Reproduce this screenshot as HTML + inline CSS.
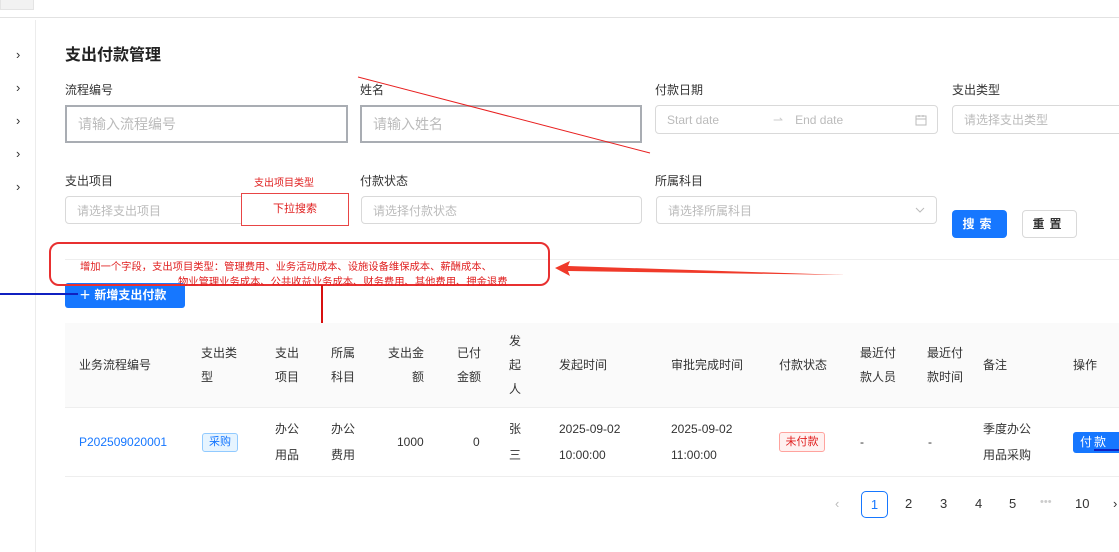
<!DOCTYPE html>
<html><head><meta charset="utf-8"><style>
*{margin:0;padding:0;box-sizing:border-box}
body{width:1119px;height:552px;overflow:hidden;background:#fff;position:relative;font-family:"Liberation Sans","Noto Sans CJK SC",sans-serif;color:#222;font-size:12px}
.a{position:absolute;white-space:nowrap}
.lbl{font-size:12px;color:#333}
.in{position:absolute;border:1px solid #d9d9d9;border-radius:4px;color:#bbb;font-size:12px;padding-left:11px;display:flex;align-items:center}
.th{position:absolute;font-size:12px;color:#333;line-height:24px}
.td{position:absolute;font-size:12px;color:#333;line-height:26px}
.pg{position:absolute;top:496px;font-size:13px;color:#333}
</style></head><body>
<div class="a" style="left:0;top:0;width:34px;height:10px;background:#f2f2f2;border:1px solid #e4e4e4;border-top:0"></div>
<div class="a" style="left:0;top:17px;width:1119px;height:1px;background:#e2e2e2"></div>
<div class="a" style="left:35px;top:20px;width:1px;height:532px;background:#ececec"></div>
<div class="a" style="left:16px;top:38px;color:#333;font-size:13px;line-height:33px">›<br>›<br>›<br>›<br>›</div>

<div class="a" style="left:65px;top:41px;font-size:16px;font-weight:bold;color:#222">支出付款管理</div>

<div class="a lbl" style="left:65px;top:81px">流程编号</div>
<div class="a lbl" style="left:360px;top:81px">姓名</div>
<div class="a lbl" style="left:655px;top:81px">付款日期</div>
<div class="a lbl" style="left:952px;top:81px">支出类型</div>

<div class="in" style="left:65px;top:105px;width:283px;height:38px;border:2px solid #a9adb3;border-radius:0;font-size:14px">请输入流程编号</div>
<div class="in" style="left:360px;top:105px;width:282px;height:38px;border:2px solid #a9adb3;border-radius:0;font-size:14px">请输入姓名</div>
<div class="in" style="left:655px;top:105px;width:283px;height:29px">Start date<span style="margin-left:54px;color:#ccc">⇀</span><span style="margin-left:12px">End date</span>
<svg style="position:absolute;right:10px;top:8px" width="12" height="12" viewBox="0 0 12 12"><rect x="1" y="2" width="10" height="9" fill="none" stroke="#bbb"/><path d="M1 5h10M4 1v2M8 1v2" stroke="#bbb"/></svg></div>
<div class="in" style="left:952px;top:105px;width:180px;height:29px">请选择支出类型</div>

<div class="a lbl" style="left:65px;top:172px">支出项目</div>
<div class="a" style="left:254px;top:174px;font-size:10px;color:#e02020">支出项目类型</div>
<div class="a lbl" style="left:360px;top:172px">付款状态</div>
<div class="a lbl" style="left:655px;top:172px">所属科目</div>

<div class="in" style="left:65px;top:196px;width:180px;height:28px">请选择支出项目</div>
<div class="a" style="left:241px;top:193px;width:108px;height:33px;border:1px solid #e84545;background:#fff;color:#e02020;font-size:11px;text-align:center;line-height:31px">下拉搜索</div>
<div class="in" style="left:361px;top:196px;width:281px;height:28px">请选择付款状态</div>
<div class="in" style="left:656px;top:196px;width:281px;height:28px">请选择所属科目<svg style="position:absolute;right:11px;top:10px" width="10" height="7" viewBox="0 0 10 7"><path d="M1 1l4 4 4-4" fill="none" stroke="#bbb"/></svg></div>
<div class="a" style="left:952px;top:210px;width:55px;height:28px;background:#1677ff;border-radius:4px;color:#fff;font-weight:bold;font-size:12px;text-align:center;line-height:28px;letter-spacing:5px">搜索</div>
<div class="a" style="left:1022px;top:210px;width:55px;height:28px;border:1px solid #d9d9d9;border-radius:4px;color:#333;font-weight:bold;font-size:12px;text-align:center;line-height:26px;letter-spacing:5px">重置</div>

<div class="a" style="left:65px;top:259px;width:1054px;height:1px;background:#eee"></div>

<div class="a" style="left:65px;top:283px;width:120px;height:25px;background:#1677ff;border-radius:3px;color:#fff;font-size:12px;font-weight:bold;line-height:25px;padding-left:14px">＋ 新增支出付款</div>
<div class="a" style="left:0;top:293px;width:78px;height:2px;background:#1020c0"></div>

<div class="a" style="left:49px;top:242px;width:501px;height:44px;border:2px solid #e83030;border-radius:10px"></div>
<div class="a" style="left:80px;top:258px;font-size:10.3px;color:#e02020">增加一个字段，支出项目类型：管理费用、业务活动成本、设施设备维保成本、薪酬成本、</div>
<div class="a" style="left:178px;top:273px;font-size:10.3px;color:#e02020">物业管理业务成本、公共收益业务成本、财务费用、其他费用、押金退费</div>

<svg class="a" style="left:0;top:0" width="1119" height="552">
<line x1="358" y1="77" x2="650" y2="153" stroke="#e82020" stroke-width="1"/>
<polygon points="555,268 570,261 568,266 845,275 568,271 570,276" fill="#f03a2a"/>
<line x1="322" y1="285" x2="322" y2="335" stroke="#d81010" stroke-width="2"/>
<polygon points="319,334 325,334 322,341" fill="#d81010"/>
</svg>

<div class="a" style="left:65px;top:323px;width:1054px;height:85px;background:#fafafa;border-bottom:1px solid #eee"></div>
<div class="th" style="left:79px;top:353px">业务流程编号</div>
<div class="th" style="left:201px;top:341px">支出类<br>型</div>
<div class="th" style="left:275px;top:341px">支出<br>项目</div>
<div class="th" style="left:331px;top:341px">所属<br>科目</div>
<div class="th" style="left:388px;top:341px;text-align:right">支出金<br>额</div>
<div class="th" style="left:457px;top:341px">已付<br>金额</div>
<div class="th" style="left:509px;top:329px">发<br>起<br>人</div>
<div class="th" style="left:559px;top:353px">发起时间</div>
<div class="th" style="left:671px;top:353px">审批完成时间</div>
<div class="th" style="left:779px;top:353px">付款状态</div>
<div class="th" style="left:860px;top:341px">最近付<br>款人员</div>
<div class="th" style="left:927px;top:341px">最近付<br>款时间</div>
<div class="th" style="left:983px;top:353px">备注</div>
<div class="th" style="left:1073px;top:353px">操作</div>

<div class="a" style="left:65px;top:476px;width:1054px;height:1px;background:#eee"></div>
<div class="td" style="left:79px;top:429px;color:#1677ff">P202509020001</div>
<div class="a" style="left:202px;top:433px;width:36px;height:19px;border:1px solid #91caff;background:#e6f4ff;border-radius:3px;color:#1677ff;font-size:11px;text-align:center;line-height:17px">采购</div>
<div class="td" style="left:275px;top:416px">办公<br>用品</div>
<div class="td" style="left:331px;top:416px">办公<br>费用</div>
<div class="td" style="left:397px;top:429px">1000</div>
<div class="td" style="left:473px;top:429px">0</div>
<div class="td" style="left:509px;top:416px">张<br>三</div>
<div class="td" style="left:559px;top:416px">2025-09-02<br>10:00:00</div>
<div class="td" style="left:671px;top:416px">2025-09-02<br>11:00:00</div>
<div class="a" style="left:779px;top:432px;width:46px;height:20px;border:1px solid #ffa39e;background:#fff1f0;border-radius:3px;color:#e02020;font-size:11px;text-align:center;line-height:18px">未付款</div>
<div class="td" style="left:860px;top:429px">-</div>
<div class="td" style="left:928px;top:429px">-</div>
<div class="td" style="left:983px;top:416px">季度办公<br>用品采购</div>
<div class="a" style="left:1073px;top:432px;width:46px;height:21px;background:#1677ff;border-radius:3px 0 0 3px;color:#fff;font-size:12px;line-height:21px;padding-left:7px;letter-spacing:2px">付款</div>
<div class="a" style="left:1094px;top:449px;width:25px;height:2px;background:#1020c0"></div>

<div class="pg" style="left:835px;color:#bbb">‹</div>
<div class="a" style="left:861px;top:491px;width:27px;height:27px;border:1px solid #1677ff;border-radius:5px;color:#1677ff;text-align:center;line-height:25px;font-size:13px">1</div>
<div class="pg" style="left:905px">2</div>
<div class="pg" style="left:940px">3</div>
<div class="pg" style="left:975px">4</div>
<div class="pg" style="left:1009px">5</div>
<div class="pg" style="left:1040px;color:#ccc;font-size:11px">•••</div>
<div class="pg" style="left:1075px">10</div>
<div class="pg" style="left:1113px">›</div>
</body></html>
